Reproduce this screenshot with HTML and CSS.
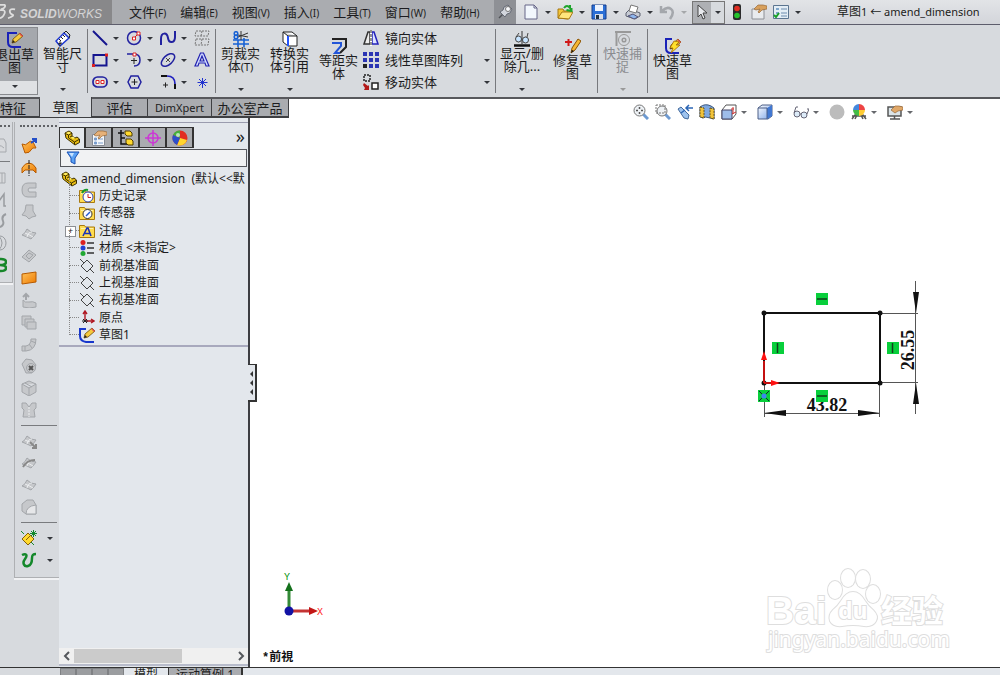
FILE: index.html
```html
<!DOCTYPE html>
<html lang="zh-CN">
<head>
<meta charset="utf-8">
<title>草图1 - amend_dimension</title>
<link rel="stylesheet" href="styles.css">
</head>
<body>
<svg class="defs" aria-hidden="true">
  <defs>
    <linearGradient id="g-orange" x1="0" y1="0" x2="1" y2="1"><stop offset="0" stop-color="#ffc35c"/><stop offset="1" stop-color="#ee7a00"/></linearGradient>
    <linearGradient id="g-blue" x1="0" y1="0" x2="1" y2="1"><stop offset="0" stop-color="#fff"/><stop offset="1" stop-color="#7aa4e8"/></linearGradient>
    <symbol id="plane" viewBox="0 0 16 16"><path d="M8 2l6 6-6 6-6-6zM1 1l4 4M11 11l4 4" fill="none" stroke="#444"/></symbol>
    <symbol id="folder" viewBox="0 0 16 16"><path d="M.5 14.500V2.500h5l1 1.500h9v10.500z" fill="#ffdc50" stroke="#a87a10"/><path d="M2 5.500h12" stroke="#fff3a8"/></symbol>
    <symbol id="part" viewBox="0 0 16 16"><path d="M1 3l4-2 3 2v3l3 2 2-1 2.500 2v3.500L11 15 2 8z" fill="#e8bd12" stroke="#3d3000"/><path d="M1.500 3.500l3 1.500v3l6 4v2.500M4.500 5L8 3M10.500 12l4.500-2.500M6 7l2-1" fill="none" stroke="#3d3000"/><path d="M2 2.900l3-1.200 2 1.200-2.500 1.300zM7 7.500l2-1 2 1.500-2 1z" fill="#fff06a"/></symbol>
    <symbol id="pencil" viewBox="0 0 16 16"><path d="M5 11l1-4 7-6 3 3-7 6z" fill="#f5c93c" stroke="#6e4a00" stroke-width=".8"/><path d="M12 2l3 3 1-1-3-3z" fill="#e05050"/><path d="M5 11l1-3 2 2z" fill="#222"/></symbol>
    <symbol id="hand-list" viewBox="0 0 16 16"><path d="M1.500 4.500h12v11h-12z" fill="#f5f7fa" stroke="#868b94"/><path d="M3.500 8h2v2h-2zM3.500 12h2v2h-2zM7 9h5M7 13h5" fill="#789ccc" stroke="#789ccc"/><path d="M3 5l4-4h5l4 1v3l-5 1-3 3-1-1 2-3-4 1z" fill="#e6b179" stroke="#96683a" stroke-width=".7"/></symbol>
    <symbol id="patch" viewBox="0 0 16 16"><path d="M1 9q3-1 5-6l4 3 5 1q-2 3-5 6l-4-2z" fill="#c6c8cb" stroke="#a3a6aa"/><path d="M4 7q5 2 8 4M6 11q1-5 5-5" fill="none" stroke="#eceef0"/></symbol>
  </defs>
</svg>

<header class="titlebar">
  <div class="brand">
    <svg class="ds" viewBox="0 0 18 22" aria-hidden="true"><path d="M0 3h5q2 1-1 4l-3 1M0 9q7-1 5 4t-6 5M17 8q-6-1-6 2t3 4-5 4" fill="none" stroke="#ddd" stroke-width="2"/></svg>
    <span><b>SOLID</b>WORKS</span>
  </div>
  <nav class="menu" aria-label="主菜单">
    <button>文件<small>(F)</small></button><button>编辑<small>(E)</small></button><button>视图<small>(V)</small></button><button>插入<small>(I)</small></button><button>工具<small>(T)</small></button><button>窗口<small>(W)</small></button><button>帮助<small>(H)</small></button>
  </nav>
  <button class="pin" aria-label="固定"><svg class="i" viewBox="0 0 16 16"><path d="M2 14l4-4" stroke="#4e5156" stroke-width="1.500"/><path d="M3 8l3-2 1-3 4-2 4 4-2 4-3 1-2 3z" fill="#d2d5dc" stroke="#666b75"/><circle cx="11" cy="5" r="2.500" fill="#f6f7fa" stroke="#777"/></svg></button>
  <div class="quick">
    <div class="split"><button aria-label="新建"><svg class="i" viewBox="0 0 16 16"><path d="M2 1h9l3 3v11H2z" fill="#f2f7fd" stroke="#668"/><path d="M11 1v3h3" fill="none" stroke="#668"/></svg></button><button class="drop" aria-label="新建选项"></button></div>
    <div class="split"><button aria-label="打开"><svg class="i" viewBox="0 0 16 16"><path d="M1 14V5h5l1 2h7l-3 8z" fill="#f4c437" stroke="#a67812"/><path d="M1 14l4-6h11l-4 7z" fill="#ffe57c" stroke="#a67812"/><path d="M7 4q3-4 6 0V1M14.500 4v3l-5-1" fill="none" stroke="#1fa52c" stroke-width="2"/></svg></button><button class="drop" aria-label="打开选项"></button></div>
    <div class="split"><button aria-label="保存"><svg class="i" viewBox="0 0 16 16"><path d="M1 1h14v14H1z" fill="#2b6fd6" stroke="#173f8c"/><path d="M4 1h8v6H4z" fill="#edf3fc"/><path d="M4 10h8v5H4z" fill="#d7dde8"/><path d="M5 11h3v4H5z" fill="#234"/></svg></button><button class="drop" aria-label="保存选项"></button></div>
    <div class="split"><button aria-label="打印"><svg class="i" viewBox="0 0 16 16"><path d="M1 9l4-4 10 4v3l-5 3-9-3z" fill="#c7cbd4" stroke="#5c6170"/><path d="M4 7l2-6 7 2-2 6z" fill="#fff" stroke="#777"/><path d="M3 12l5-2 5 3-4 2z" fill="#8fb7ee" stroke="#557"/></svg></button><button class="drop" aria-label="打印选项"></button></div>
    <div class="split off"><button aria-label="撤消" disabled><svg class="i" viewBox="0 0 16 16"><path d="M2 2v6h6M3 7q5-5 9-2t-1 10" fill="none" stroke="#a4a7ac" stroke-width="2.500"/></svg></button><button class="drop" aria-label="撤消选项" disabled></button></div>
    <div class="split picked"><button aria-label="选择"><svg class="i" viewBox="0 0 16 16"><path d="M4 1v12l3-3 2 5 2-1-2-5h4z" fill="#e8eaee" stroke="#444"/></svg></button><button class="drop" aria-label="选择选项"></button></div>
    <button aria-label="重建模型"><svg class="i" viewBox="0 0 16 16"><rect x="4" y="0" width="8" height="16" rx="2" fill="#2b2b2b"/><circle cx="8" cy="4.500" r="2.800" fill="#e12d22"/><circle cx="8" cy="11.500" r="2.800" fill="#25c22c"/></svg></button>
    <button aria-label="文件属性"><svg class="i" viewBox="0 0 16 16"><path d="M1 5h12v10H1z" fill="#e9ebee" stroke="#8d9096"/><path d="M3 5l4-4h5l4 1v3l-5 1-3 3-1-1 2-3-4 1z" fill="#d8a05c" stroke="#96683a" stroke-width=".7"/></svg></button>
    <div class="split"><button aria-label="选项"><svg class="i" viewBox="0 0 16 16"><path d="M.5 1.500h15v13H.5z" fill="#e3edf5" stroke="#5b7590"/><path d="M3 4h3v2H3zM3 8h3v2H3z" fill="#7fa6cb"/><path d="M8 5h6M8 9h6M8 12h6" stroke="#6c8cae"/><path d="M1 11l2 2 3-4" fill="none" stroke="#18a028" stroke-width="2"/></svg></button><button class="drop" aria-label="更多选项"></button></div>
  </div>
  <h1 class="doc">草图<small>1 ← amend_dimension</small></h1>
</header>

<section class="ribbon" aria-label="草图工具">
  <button class="tool exit"><svg class="i" viewBox="0 0 16 16"><path d="M14 15H6q-5 0-5-5V1h9" fill="none" stroke="#1a22b8" stroke-width="2"/><use href="#pencil"/></svg><span>退出草<br>图</span><i class="caret"></i></button>
  <button class="tool"><svg class="i" viewBox="0 0 16 16"><path d="M1 10l4 5L14 7 9 2z" fill="#fff" stroke="#1b35d0" stroke-width="1.500"/><path d="M9 2l2-2 4 4-1 3M4 8l2 2M6 6l2 2M8 4l2 2M3 13l4-1M5 15V10" fill="none" stroke="#222"/></svg><span>智能尺<br>寸</span><i class="caret"></i></button>
  <div class="rule"></div>
  <div class="shapes">
    <div class="split"><button aria-label="直线"><svg class="i" viewBox="0 0 16 16"><path d="M1 1l14 14" stroke="#15158f" stroke-width="2"/></svg></button><button class="drop" aria-label="直线选项"></button></div>
    <div class="split"><button aria-label="圆"><svg class="i" viewBox="0 0 16 16"><circle cx="8" cy="8" r="6.500" fill="none" stroke="#2222a0" stroke-width="1.500"/><path d="M8 8l4-4" stroke="#c22"/><path d="M6.500 7h3v3h-3zM11 2h3v3h-3z" fill="#fff" stroke="#d22"/></svg></button><button class="drop" aria-label="圆选项"></button></div>
    <div class="split"><button aria-label="样条曲线"><svg class="i" viewBox="0 0 16 16"><path d="M1 15V9C1 2 7 2 8 8s7 5 7-1V1" fill="none" stroke="#2222a0" stroke-width="2"/></svg></button><button class="drop" aria-label="样条曲线选项"></button></div>
    <div class="split"><button aria-label="文字框"><svg class="i" viewBox="0 0 16 16"><path d="M2 1h13l-1 5H1zM2 9h13l-1 6H1zM8 1L7 6M8 9l-1 6" fill="none" stroke="#777" stroke-dasharray="2 1"/></svg></button></div>
    <div class="split"><button aria-label="矩形"><svg class="i" viewBox="0 0 16 16"><path d="M1.500 3h13v10.500h-13z" fill="none" stroke="#15158f" stroke-width="2"/><path d="M0 12h3v3H0zM13 1.500h3v3h-3z" fill="#d22"/></svg></button><button class="drop" aria-label="矩形选项"></button></div>
    <div class="split"><button aria-label="圆弧"><svg class="i" viewBox="0 0 16 16"><path d="M1 2h7q6 0 6 6t-6 6" fill="none" stroke="#2222a0" stroke-width="1.500"/><path d="M5 8.500h6M8 6v6" stroke="#222"/><path d="M7 1h3v3H7z" fill="#fff" stroke="#d22"/></svg></button><button class="drop" aria-label="圆弧选项"></button></div>
    <div class="split"><button aria-label="椭圆"><svg class="i" viewBox="0 0 16 16"><ellipse cx="8" cy="8" rx="8" ry="4.500" transform="rotate(-42 8 8)" fill="none" stroke="#2222a0" stroke-width="1.500"/><path d="M6 6l4 4M10 6l-4 4" stroke="#222" stroke-width=".8"/></svg></button><button class="drop" aria-label="椭圆选项"></button></div>
    <div class="split"><button aria-label="文字"><svg class="i" viewBox="0 0 16 16"><path d="M1 14h3l1-3h6l1 3h3L9.500 1h-3zM6 9l2-5 2 5z" fill="#d3dcff" stroke="#2222b0" stroke-width="1.200"/></svg></button></div>
    <div class="split"><button aria-label="槽口"><svg class="i" viewBox="0 0 16 16"><rect x="1" y="3" width="14" height="10" rx="4.500" fill="none" stroke="#2222a0" stroke-width="1.700"/><path d="M4 6.500h3v3H4zM9 6.500h3v3H9z" fill="#fff" stroke="#d22"/></svg></button><button class="drop" aria-label="槽口选项"></button></div>
    <div class="split"><button aria-label="多边形"><svg class="i" viewBox="0 0 16 16"><path d="M5 2h7l3 6-3 6H5L2 8z" fill="none" stroke="#2222a0" stroke-width="1.500"/><path d="M5.500 8h6M8.500 5v6" stroke="#222"/></svg></button></div>
    <div class="split"><button aria-label="圆角"><svg class="i" viewBox="0 0 16 16"><path d="M1 2h6M15 10v5" stroke="#111" stroke-width="2"/><path d="M7 2q8 0 8 8" fill="none" stroke="#2222c0" stroke-width="1.700"/><path d="M3 11h5M5.500 8.500v5" stroke="#222"/></svg></button><button class="drop" aria-label="圆角选项"></button></div>
    <div class="split"><button aria-label="点"><svg class="i" viewBox="0 0 16 16"><path d="M8.500 4v10M3.500 8.500h10M5 5l7 7M12 5l-7 7" stroke="#2233d0"/></svg></button></div>
  </div>
  <div class="rule"></div>
  <button class="tool"><svg class="i" viewBox="0 0 16 16"><path d="M0 9h16M11 7v9M0 13h16M5 9v7" stroke="#1761d4" stroke-width="1.600"/><path d="M5 4l10 2M5 6l10-4M8 0v9" stroke="#333"/><circle cx="3" cy="2.500" r="1.800" fill="none" stroke="#1761d4" stroke-width="1.500"/><circle cx="3" cy="6" r="1.800" fill="none" stroke="#1761d4" stroke-width="1.500"/></svg><span>剪裁实<br>体<small>(T)</small></span><i class="caret"></i></button>
  <button class="tool"><svg class="i" viewBox="0 0 16 16"><path d="M1 1h9l5 4v10H6l-5-4zM1 1l5 4h9M6 5v10" fill="#fff" stroke="#222"/><path d="M6 5v10" stroke="#2255ff" stroke-width="2"/></svg><span>转换实<br>体引用</span><i class="caret"></i></button>
  <button class="tool low"><svg class="i" viewBox="0 0 16 16"><path d="M1 1h14v8l-6 6" fill="none" stroke="#222" stroke-width="2"/><path d="M1 5h9v3l-6 7h5" fill="none" stroke="#2255d8" stroke-width="2"/></svg><span>等距实<br>体</span></button>
  <div class="list">
    <button class="item"><svg class="i" viewBox="0 0 16 16"><path d="M1 14L5 2h2v12z" fill="#eee" stroke="#333" stroke-width="1.500"/><path d="M15 14L11 2H9v12z" fill="#dfe4ff" stroke="#22b" stroke-width="1.500"/><path d="M8 0v16" stroke="#fff" stroke-width="2"/><path d="M8 0v16" stroke="#222" stroke-dasharray="3 1"/></svg><span>镜向实体</span></button>
    <button class="item"><svg class="i" viewBox="0 0 16 16"><path d="M0 0h4v4H0zM6 0h4v4H6zM12 0h4v4h-4zM0 6h4v4H0zM6 6h4v4H6zM12 6h4v4h-4zM6 12h4v4H6zM12 12h4v4h-4z" fill="#2a34b4"/><path d="M0 12h4v4H0z" fill="#222"/></svg><span>线性草图阵列</span><i class="caret"></i></button>
    <button class="item"><svg class="i" viewBox="0 0 16 16"><path d="M1 1h6v6H1z" fill="none" stroke="#222" stroke-width="1.500" stroke-dasharray="2 1"/><path d="M9 9h6v6H9z" fill="#fff" stroke="#222" stroke-width="1.500"/><path d="M1 9l4 3 1-1v5H1l1-2-2-3z" fill="#b31919"/></svg><span>移动实体</span><i class="caret"></i></button>
  </div>
  <div class="rule"></div>
  <button class="tool wide"><svg class="i" viewBox="0 0 16 16"><path d="M0 14.500h16" stroke="#111" stroke-width="2.500"/><path d="M8 0v13M4 11l8-5" stroke="#333"/><circle cx="4.500" cy="8" r="3" fill="#c7e4ff" stroke="#444"/><circle cx="11.500" cy="9" r="3" fill="#c7e4ff" stroke="#444"/><path d="M2 6l3-4M13 6l1-4" stroke="#444"/></svg><span>显示/删<br>除几...</span><i class="caret"></i></button>
  <button class="tool low"><svg class="i" viewBox="0 0 16 16"><path d="M0 4h7M3.500 1v7" stroke="#d01818" stroke-width="2"/><path d="M6 15l1-5 6-9 3 2-6 9z" fill="#f7b733" stroke="#8a5200"/><path d="M6 15l1-3 2 1z" fill="#111"/></svg><span>修复草<br>图</span></button>
  <div class="rule"></div>
  <button class="tool" disabled><svg class="i" viewBox="0 0 16 16"><path d="M0 1h16M1.500 1v14" stroke="#999" stroke-width="2"/><circle cx="9" cy="9" r="5.500" fill="none" stroke="#999"/><circle cx="9" cy="9" r="1.800" fill="none" stroke="#999" stroke-width="1.500"/></svg><span>快速捕<br>捉</span><i class="caret"></i></button>
  <div class="rule"></div>
  <button class="tool low"><svg class="i" viewBox="0 0 16 16"><path d="M14 15H6q-5 0-5-5V1h6" fill="none" stroke="#1a22b8" stroke-width="2"/><use href="#pencil"/><path d="M9 3l5 1-3 3h4l-9 8 2-5H5z" fill="#ffe02a" stroke="#a66b00" stroke-width=".8"/></svg><span>快速草<br>图</span></button>
</section>

<div class="tabrow">
  <nav class="tabs" aria-label="命令管理器">
    <button class="first">特征</button><button class="on">草图</button><button>评估</button><button><small>DimXpert</small></button><button>办公室产品</button>
  </nav>
  <div class="viewbar">
    <button aria-label="整屏显示全图"><svg class="i" viewBox="0 0 16 16"><path d="M10 10l5 5" stroke="#6d9ad2" stroke-width="3"/><circle cx="6.500" cy="6.500" r="5.500" fill="#eef2f6" stroke="#777"/><path d="M6.500 3v7M3 6.500h7" stroke="#555" stroke-width="1.500" stroke-dasharray="2 3"/></svg></button>
    <button aria-label="局部放大"><svg class="i" viewBox="0 0 16 16"><path d="M10 10l5 5" stroke="#6d9ad2" stroke-width="3"/><circle cx="7" cy="7" r="5" fill="#eef2f6" stroke="#777"/><path d="M1 1h9v8H1z" fill="none" stroke="#777" stroke-dasharray="2 1"/></svg></button>
    <button aria-label="上一视图"><svg class="i" viewBox="0 0 16 16"><path d="M1 5l3-2 8 8-1 4-4-1z" fill="#9cc2ee" stroke="#43699b"/><path d="M16 4H9M12 1L9 4l3 3M4 9l4-3" fill="none" stroke="#2b65b5" stroke-width="1.500"/></svg></button>
    <button aria-label="剖面视图"><svg class="i" viewBox="0 0 16 16"><path d="M1 3q5-4 11-1l3 2v11l-4-1q-5-2-7 0l-3-1z" fill="#7ea8e0" stroke="#3c577d"/><path d="M11 4l4 1v10l-4-1zM1 3l4 1v10l-4-1z" fill="#f1c33a" stroke="#665018" stroke-dasharray="2 1"/></svg></button>
    <div class="split"><button aria-label="视图定向"><svg class="i" viewBox="0 0 16 16"><path d="M1 6l4-5h10v9l-4 5H1z" fill="#fff" stroke="#555"/><path d="M1 6h10v9H1z" fill="#9ebdea" stroke="#446"/><path d="M12 3v7M15 8l-4 2M13 5h-3" stroke="#c33" fill="none"/></svg></button><button class="drop" aria-label="视图定向选项"></button></div>
    <div class="split"><button aria-label="显示样式"><svg class="i" viewBox="0 0 16 16"><path d="M1 4l4-3h10v11l-4 3H1z" fill="url(#g-blue)" stroke="#4c5f86"/><path d="M10 4l5-3v11l-5 3z" fill="#4178d2"/><path d="M1 4h9v11" fill="none" stroke="#4c5f86"/></svg></button><button class="drop" aria-label="显示样式选项"></button></div>
    <div class="split"><button aria-label="隐藏/显示项目"><svg class="i" viewBox="0 0 16 16"><circle cx="4" cy="10" r="3" fill="#dcebf8" stroke="#667"/><circle cx="11" cy="11" r="3" fill="#dcebf8" stroke="#667"/><path d="M1 9l2-6h2M14 10l2-5h-2M7 10h1" fill="none" stroke="#667"/></svg></button><button class="drop" aria-label="隐藏项目选项"></button></div>
    <button aria-label="编辑外观"><svg class="i" viewBox="0 0 16 16"><circle cx="8" cy="8" r="7.500" fill="#bcbcbc"/></svg></button>
    <div class="split"><button aria-label="应用布景"><svg class="i" viewBox="0 0 16 16"><path d="M1 15l3-4h8l3 4M4 15l2-4M12 15l-2-4M1 12h14" fill="none" stroke="#555" stroke-width="1.500"/><path d="M8 6V0a6 6 0 0 1 6 6z" fill="#e44"/><path d="M8 6V0a6 6 0 0 0-6 6z" fill="#48d"/><path d="M8 6v6a6 6 0 0 1-6-6z" fill="#4b4"/><path d="M8 6v6a6 6 0 0 0 6-6z" fill="#fc3"/></svg></button><button class="drop" aria-label="布景选项"></button></div>
    <div class="split"><button aria-label="视图设定"><svg class="i" viewBox="0 0 16 16"><path d="M1 3h13v9H1z" fill="#dbe4e8" stroke="#555" stroke-width="1.500"/><path d="M3 15h10M7.500 12v3" stroke="#555" stroke-width="1.500"/><path d="M4 6l4-4h4l4 1v3l-5 1-3 2z" fill="#e0a869" stroke="#96683a" stroke-width=".7"/></svg></button><button class="drop" aria-label="视图设定选项"></button></div>
  </div>
</div>

<main class="work">
  <div class="dock">
    <div class="strip cut">
      <i class="grip"></i>
      <button aria-label="曲面"><svg class="i" viewBox="0 0 16 16"><path d="M1 5l4-4h8l2 4v9H1zM3 10q5-5 10 0" fill="#d8dadd" stroke="#a6a9ad"/></svg></button>
      <hr>
      <button aria-label="放样"><svg class="i" viewBox="0 0 16 16"><path d="M3 2h5v13H3zM8 4h6v10H8zM11 4v10" fill="#d8dadd" stroke="#a6a9ad"/></svg></button>
      <button aria-label="折线"><svg class="i" viewBox="0 0 16 16"><path d="M3 4l5 6 5-7v12h2" fill="none" stroke="#999ca0" stroke-width="1.500"/></svg></button>
      <button aria-label="曲线"><svg class="i" viewBox="0 0 16 16"><path d="M15 1q-5 2-3 7t-6 7" fill="none" stroke="#999ca0" stroke-width="2"/></svg></button>
      <button aria-label="投影"><svg class="i" viewBox="0 0 16 16"><ellipse cx="9" cy="8" rx="6" ry="7" fill="none" stroke="#999ca0"/><path d="M8 1q6 7 0 14" fill="none" stroke="#999ca0"/></svg></button>
      <button aria-label="螺旋线"><svg class="i" viewBox="0 0 16 16"><path d="M5 2h5q5 0 5 3t-6 3q6 0 6 3t-5 3H5" fill="none" stroke="#17872a" stroke-width="2.500"/></svg></button>
    </div>
    <div class="strip">
      <i class="grip"></i>
      <button aria-label="拉伸曲面"><svg class="i" viewBox="0 0 16 16"><path d="M1 6q4 2 6-1t5-1l3 6q-4-1-5 2t-6 3z" fill="url(#g-orange)" stroke="#b75a00"/><path d="M10 5l4-3M11 1h4v4" fill="none" stroke="#244fc8" stroke-width="2"/></svg></button>
      <button aria-label="旋转曲面"><svg class="i" viewBox="0 0 16 16"><path d="M1 13V8q3-5 7-5t7 5v5l-3-3H4z" fill="url(#g-orange)" stroke="#b75a00"/><path d="M8 0v16" stroke="#222" stroke-dasharray="4 1"/></svg></button>
      <button class="off" aria-label="扫描曲面"><svg class="i" viewBox="0 0 16 16"><path d="M15 1H7Q1 1 1 8t6 7h8v-5H8q-2-2 0-4h7z"/></svg></button>
      <button class="off" aria-label="放样曲面"><svg class="i" viewBox="0 0 16 16"><path d="M5 1h7v6l3 5-4 1-3 2-3-3-4-1q4-3 4-10z"/></svg></button>
      <button class="off" aria-label="边界曲面"><svg class="i" viewBox="0 0 16 16"><use href="#patch"/></svg></button>
      <button class="off" aria-label="填充曲面"><svg class="i" viewBox="0 0 16 16"><path d="M1 9l7-7 7 5-7 7zM5 8l3-3 4 2-4 4z"/></svg></button>
      <button aria-label="平面区域"><svg class="i" viewBox="0 0 16 16"><path d="M1 4l14-2v10L1 14z" fill="url(#g-orange)" stroke="#b75a00"/></svg></button>
      <button class="off" aria-label="等距曲面"><svg class="i" viewBox="0 0 16 16"><path d="M2 8q2 3 6 2t7 1v4q-7 2-13 0z"/><path d="M5 8V2M2 5l3-3 3 3" fill="none" stroke-width="2"/></svg></button>
      <button class="off" aria-label="加厚"><svg class="i" viewBox="0 0 16 16"><path d="M1 2h9v9H1z"/><path d="M4 5h9v8H4z"/><path d="M6 8h9v7H6z"/></svg></button>
      <button class="off" aria-label="弯曲"><svg class="i" viewBox="0 0 16 16"><path d="M1 10h4q5-1 5-7h5q0 11-10 12H1zM4 10v5M8 8l3 4M10 5l5 2"/></svg></button>
      <button class="off" aria-label="删除面"><svg class="i" viewBox="0 0 16 16"><path d="M1 6l4-5 6 1 4 5-4 8H5z"/><circle cx="10" cy="10" r="4.500"/><path d="M8 8l4 4M12 8l-4 4" stroke="#555" stroke-width="2"/></svg></button>
      <button class="off" aria-label="实体"><svg class="i" viewBox="0 0 16 16"><path d="M1 4l7-3 7 3v8l-7 4-7-4zM1 4l7 4 7-4M8 8v8M4 3l7 4"/></svg></button>
      <button class="off" aria-label="缝合曲面"><svg class="i" viewBox="0 0 16 16"><path d="M1 1h4l3 4 3-4h4v5l-2 2 1 7H2l1-7-2-2z"/><path d="M8 5v10" stroke="#eceef0" stroke-dasharray="2 1"/></svg></button>
      <hr>
      <button class="off" aria-label="延伸曲面"><svg class="i" viewBox="0 0 16 16"><use href="#patch"/><path d="M9 9l6 6M15 11v4h-4" fill="none" stroke="#888" stroke-width="2"/></svg></button>
      <button class="off" aria-label="剪裁曲面"><svg class="i" viewBox="0 0 16 16"><use href="#patch"/><path d="M2 12q4-7 12-7" fill="none" stroke="#888" stroke-width="2"/></svg></button>
      <button class="off" aria-label="解除剪裁"><svg class="i" viewBox="0 0 16 16"><use href="#patch"/></svg></button>
      <button class="off" aria-label="圆角曲面"><svg class="i" viewBox="0 0 16 16"><path d="M1 5l5-4h6l3 5v9H5l-4-3z"/><path d="M5 15q0-8 10-9v9z" fill="#e6e7e9"/></svg></button>
      <hr>
      <div class="split"><button aria-label="参考几何体"><svg class="i" viewBox="0 0 16 16"><path d="M1 9l6-6 6 6-6 6z" fill="#ffd92e" stroke="#85600a"/><path d="M5 10l4-4" stroke="#85600a"/><path d="M12.500 0v7M9 3.500h7M10 1l5 5M15 1l-5 5M0 1l3 3M10 12l3 3" stroke="#14882b"/></svg></button><button class="drop" aria-label="参考几何体选项"></button></div>
      <div class="split"><button aria-label="曲线"><svg class="i" viewBox="0 0 16 16"><path d="M1 3C5 1 7 3 4 7S3 15 7 14s4-5 4-8 1-4 4-4" fill="none" stroke="#14882b" stroke-width="2.500"/></svg></button><button class="drop" aria-label="曲线选项"></button></div>
    </div>
  </div>

  <aside class="panel">
    <div class="ptabs">
      <button class="on" aria-label="特征管理器"><svg class="i" viewBox="0 0 16 16"><use href="#part"/></svg></button>
      <button aria-label="属性管理器"><svg class="i" viewBox="0 0 16 16"><use href="#hand-list"/></svg></button>
      <button aria-label="配置管理器"><svg class="i" viewBox="0 0 16 16"><path d="M0 3h6M3 0v14h6M3 8h4" fill="none" stroke="#111" stroke-width="1.500"/><path d="M7 1h5l2 2v3H9L7 4zM8 9h5l2 2v4h-5l-2-2z" fill="#ffd92e" stroke="#4f3c00"/></svg></button>
      <button aria-label="尺寸专家管理器"><svg class="i" viewBox="0 0 16 16"><circle cx="8" cy="8" r="5" fill="none" stroke="#cc37d5" stroke-width="1.500"/><path d="M8 0v16M0 8h16" stroke="#cc37d5" stroke-width="1.500"/></svg></button>
      <button aria-label="外观管理器"><svg class="i" viewBox="0 0 16 16"><circle cx="8" cy="8" r="7.500" fill="#e22e22"/><path d="M8 8L1 5a7.500 7.500 0 0 1 7-4.500z" fill="#44b23d"/><path d="M8 8l7 2a7.500 7.500 0 0 1-10 5z" fill="#ffd52e"/><path d="M8 8l-3 7a7.500 7.500 0 0 1-4-10z" fill="#2c50ca"/><circle cx="6" cy="5" r="2" fill="#fff" opacity=".65"/></svg></button>
      <button class="more" aria-label="更多">»</button>
    </div>
    <label class="filter"><svg class="i" viewBox="0 0 16 16"><path d="M2 2h12l-4 6v6l-4-2V8z" fill="#5ba2f5" stroke="#1a51b4"/><path d="M4 3h5l-2 4z" fill="#c9e3ff"/></svg><input type="text" aria-label="过滤"></label>
    <ul class="tree">
      <li class="root"><svg class="i" viewBox="0 0 16 16"><use href="#part"/></svg>amend_dimension&nbsp; (默认&lt;&lt;默</li>
      <li><svg class="i" viewBox="0 0 16 16"><use href="#folder"/><circle cx="9" cy="9" r="5" fill="#fff" stroke="#2d42b4"/><path d="M9 6v3.500h3" fill="none" stroke="#c22"/><path d="M3 5q2-4 6-3" fill="none" stroke="#179a2c" stroke-width="2"/></svg>历史记录</li>
      <li><svg class="i" viewBox="0 0 16 16"><use href="#folder"/><circle cx="8.500" cy="9" r="4.500" fill="#fff" stroke="#333"/><path d="M7 11l4-4" stroke="#245bd0" stroke-width="1.500"/></svg>传感器</li>
      <li class="plus"><svg class="i" viewBox="0 0 16 16"><use href="#folder"/><path d="M4 13l4-8h1l3 8M6 10.500h5" fill="none" stroke="#1a32b8" stroke-width="1.600"/></svg>注解</li>
      <li><svg class="i" viewBox="0 0 16 16"><circle cx="4" cy="2.500" r="2.500" fill="#dc2020"/><circle cx="4" cy="8" r="2.500" fill="#2440d4"/><circle cx="4" cy="13.500" r="2.500" fill="#20a832"/><path d="M8 3h7M8 8h7M8 13h7" stroke="#333" stroke-width="1.500"/></svg>材质 &lt;未指定&gt;</li>
      <li><svg class="i" viewBox="0 0 16 16"><use href="#plane"/></svg>前视基准面</li>
      <li><svg class="i" viewBox="0 0 16 16"><use href="#plane"/></svg>上视基准面</li>
      <li><svg class="i" viewBox="0 0 16 16"><use href="#plane"/></svg>右视基准面</li>
      <li><svg class="i" viewBox="0 0 16 16"><path d="M6 2v9h8M4 4l2-3 2 3M12 9l3 2-3 2" fill="none" stroke="#b01822" stroke-width="1.400"/><path d="M3 11h6M4 9l4 4M8 9l-4 4" stroke="#222"/></svg>原点</li>
      <li><svg class="i" viewBox="0 0 16 16"><path d="M15 15H7q-6-1-6-6V2h6" fill="none" stroke="#1737cc" stroke-width="2"/><use href="#pencil"/></svg>草图1</li>
    </ul>
    <div class="scroll"><button aria-label="向左滚动"><svg viewBox="0 0 8 10"><path d="M6 1L2 5l4 4" /></svg></button><div class="track"><div class="thumb"></div></div><button aria-label="向右滚动"><svg viewBox="0 0 8 10"><path d="M2 1l4 4-4 4"/></svg></button></div>
  </aside>

  <section class="canvas" aria-label="图形区域">
    <button class="handle" aria-label="折叠面板"><i></i><i></i><i></i></button>
    <svg class="sketch" viewBox="740 270 200 160" role="img" aria-label="矩形草图">
      <path d="M764.500 384v33M879.500 384v33M880 313.500h38M880 382.500h38M764 413.500h116M915.500 281v133" stroke="#555" fill="none"/>
      <path d="M764 413l22-3v6zM880 413l-22-3v6zM916 313l-3-21h6zM916 383l-3 21h6z" fill="#111"/>
      <path d="M764 313h116v70H764z" fill="none" stroke="#111" stroke-width="2"/>
      <g fill="#111"><circle cx="764" cy="313" r="2.500"/><circle cx="880" cy="313" r="2.500"/><circle cx="880" cy="383" r="2.500"/><circle cx="764" cy="383" r="2.500"/></g>
      <path d="M764 383v-22M764 383h10" stroke="#f11" stroke-width="1.500"/>
      <path d="M764 351l-3 9h6zM780 383l-9-3v6z" fill="#f11"/>
      <text class="dim" x="827" y="411" text-anchor="middle">43.82</text>
      <text class="dim" transform="translate(914 350) rotate(-90)" text-anchor="middle">26.55</text>
      <path d="M816 293h12v12h-12zM816 390h12v12h-12zM772 342h12v12h-12zM887 342h12v12h-12zM758 390h12v12h-12z" fill="#08cf3b"/>
      <path d="M817 299h10M817 396h10M777.500 343v10M892.500 343v10" stroke="#123d1c" stroke-width="1.500"/>
      <path d="M759 391l10 10M769 391l-10 10" stroke="#123"/><circle cx="764" cy="396" r="2.500" fill="#3c86f0"/>
    </svg>
    <svg class="triad" viewBox="280 570 46 50" role="img" aria-label="坐标系">
      <path d="M289 611v-22" stroke="#338a37" stroke-width="3"/><path d="M289 582l-4 9h8z" fill="#14701b"/>
      <path d="M289 611h22" stroke="#c43434" stroke-width="3"/><path d="M318 611l-9-4v8z" fill="#c21616"/>
      <circle cx="289" cy="611" r="4.500" fill="#1212a4"/>
      <text x="284" y="580" fill="#0a930f">Y</text><text x="317" y="615" fill="#f22">X</text>
    </svg>
    <div class="viewname">*前視</div>
    <svg class="mark" viewBox="760 560 190 95" aria-hidden="true">
      <g class="outline">
        <path d="M853 592q7 0 12 9 3 5 8 9 6 6 3 11-3 6-12 5-11-2-22 0-9 1-12-5-2-6 3-11 5-4 8-9 5-9 12-9z"/>
        <ellipse cx="835" cy="590" rx="7" ry="9"/><ellipse cx="848" cy="578" rx="7" ry="9"/><ellipse cx="863" cy="579" rx="7" ry="9"/><ellipse cx="873" cy="594" rx="7" ry="9"/>
        <text x="766" y="624" class="big">Bai</text>
        <text x="838" y="619" class="du">du</text>
        <text x="881" y="622" class="cn">经验</text>
        <text x="768" y="647" class="url">jingyan.baidu.com</text>
      </g>
    </svg>
  </section>
</main>

<footer class="sheets">
  <div class="nav"><i></i><i></i><i></i><i></i></div>
  <button class="on">模型</button><button>运动算例 1</button>
</footer>
</body>
</html>
```
FILE: styles.css
```css
:root {
  --bar: #d7dade;
  --panel: #e3e7ec;
  --gray: #aaacb0;
  --line: #4c4d52;
}
* { box-sizing: border-box; }
body {
  margin: 0;
  height: 100vh;
  display: flex;
  flex-direction: column;
  overflow: hidden;
  background: var(--bar);
  color: #1c1c20;
  font: 12px/16px "Noto Sans", "Noto Sans CJK SC", sans-serif;
}
button {
  margin: 0;
  padding: 0;
  border: 0;
  background: none;
  color: inherit;
  font: inherit;
}
small { font-size: 11px; }
.defs { position: absolute; width: 0; height: 0; }
.i { display: block; width: 16px; height: 16px; flex: none; }

.caret, .drop::after {
  display: block;
  width: 0;
  height: 0;
  border: 3px solid transparent;
  border-top-color: #33353a;
  border-bottom: 0;
}
.drop::after { content: ""; }
.split { display: flex; align-items: center; }
.drop { width: 16px; height: 16px; display: grid; place-items: center; }

/* title bar */
.titlebar {
  flex: none;
  height: 25px;
  display: flex;
  border-bottom: 1px solid #5d5d6c;
  background: linear-gradient(#e2e4e7, #d3d5da);
  white-space: nowrap;
}
.brand {
  width: 112px;
  display: flex;
  align-items: center;
  gap: 4px;
  background: #88888a;
  color: #d4d4d5;
  font: italic 12px/24px "Liberation Sans", sans-serif;
}
.brand span { padding-top: 4px; }
.ds { width: 16px; height: 22px; }
.menu {
  display: flex;
  align-items: center;
  gap: 14px;
  width: 382px;
  padding-left: 17px;
  background: var(--gray);
  font-size: 13px;
}
.menu small { font-size: 10px; }
.pin { width: 22px; display: grid; place-items: center; background: #8e9095; }
.quick { display: flex; align-items: center; padding-left: 6px; }
.quick button:not(.drop) { width: 18px; display: grid; place-items: center; }
.quick .picked { margin-right: 3px; border: 1px solid #777; height: 23px; }
.quick .picked button { height: 21px; background: #aeb0b4; }
.quick .picked .drop { width: 13px; background: var(--bar); }
.quick > button { margin-right: 4px; }
.off .drop::after { border-top-color: #a5a7aa; }
.doc { flex: 1; margin: 0; padding-left: 31px; font-size: 12px; font-weight: 400; line-height: 24px; }

/* ribbon */
.ribbon {
  flex: none;
  height: 74px;
  padding-top: 2px;
  display: flex;
  overflow: hidden;
  border-bottom: 2px solid #57585c;
  font-size: 13px;
  white-space: nowrap;
}
.tool {
  width: 49px;
  padding: 4px 0 6px;
  display: flex;
  flex-direction: column;
  align-items: center;
  line-height: 13px;
}
.tool .caret { margin-top: auto; }
.tool.low { padding-top: 11px; }
.tool.wide { width: 52px; }
.tool:disabled { color: #8b8d91; }
.tool:disabled .caret { border-top-color: #999; }
.exit {
  width: 47px;
  margin: 0 0 2px -9px;
  border: 1px solid #888a8e;
  background: linear-gradient(#a5a8ad 0 53px, #dfe1e4 53px);
}
.rule { width: 1px; margin: 2px 0 4px; background: #77797d; }
.shapes {
  width: 127px;
  padding-left: 4px;
  display: grid;
  grid-template: repeat(3, 22px) / 34px 34px 34px 16px;
}
.list { width: 132px; display: grid; grid-template-rows: repeat(3, 22px); }
.item { display: flex; align-items: center; gap: 6px; padding-right: 5px; }
.item .caret { margin-left: auto; }

/* command tabs and view toolbar */
.tabrow { position: relative; z-index: 1; flex: none; height: 19px; display: flex; background: #fff; }
.tabs {
  display: grid;
  grid-template-columns: 40px 52px 56px 64px 77px;
  font-size: 13px;
}
.tabs button {
  border: 1px solid #3f4043;
  border-width: 0 1px 2px 0;
  background: var(--gray);
  line-height: 16px;
  text-align: center;
}
.tabs .first { text-align: left; }
.tabs .on { margin-top: -2px; border-bottom-width: 1px; background: var(--bar); }
.viewbar { display: flex; align-items: start; gap: 6px; padding: 5px 0 0 344px; }
.viewbar .drop { width: 14px; }
.viewbar .drop::after { border-top-color: #66686c; }

/* work area */
.work { flex: 1; min-height: 0; display: flex; }
.dock { width: 59px; flex: none; display: flex; align-items: start; gap: 1px; padding-top: 4px; overflow: hidden; }
.strip {
  flex: 1;
  padding: 3px 0 6px 6px;
  border: 1px solid #aeb0b3;
  border-width: 0 0 1px 1px;
  box-shadow: 0 2px 0 #f1f2f4;
}
.strip.cut { flex: none; width: 13px; padding-left: 0; border-left: 0; border-right: 1px solid #aeb0b3; }
.strip.cut button { margin-left: -9px; }
.strip.cut .grip { margin-left: 0; }
.grip { display: block; height: 3px; margin: 0 2px 7px -1px; border-top: 2px dotted #606266; }
.strip button:not(.drop) { display: grid; align-items: center; height: 22px; }
.strip .split .drop { margin-left: 5px; }
.strip hr { height: 1px; margin: 4px 2px 4px 0; border: 0; background: #797b7e; }
.strip .off { fill: #c6c8cb; stroke: #a3a6aa; }

.panel {
  width: 191px;
  flex: none;
  display: flex;
  flex-direction: column;
  overflow: hidden;
  border-right: 2px solid #3d3e42;
  background: var(--panel);
}
.ptabs {
  flex: none;
  display: grid;
  grid-template-columns: repeat(5, 27px) 1fr;
  height: 30px;
  margin-top: 4px;
  padding-top: 4px;
  border-top: 1px solid #9a9cae;
  background: var(--panel);
}
.ptabs button {
  display: grid;
  place-items: center;
  height: 21px;
  border: 1px solid #333;
  border-width: 1px 2px 1px 0;
  background: var(--gray);
}
.ptabs .on { border-width: 1px 2px 0 1px; background: var(--panel); }
.ptabs .more { justify-items: end; padding: 0 3px 4px 0; border: 0; background: none; font-size: 18px; line-height: 16px; }
.filter {
  flex: none;
  display: flex;
  align-items: center;
  height: 18px;
  margin: -3px 1px 3px;
  padding-left: 4px;
  border: 1px solid #55575c;
  background: #f1f2f3;
}
.filter input { flex: 1; min-width: 0; border: 0; padding: 0; background: none; outline: 0; font: inherit; }
.tree {
  flex: none;
  height: 177px;
  margin: 0;
  padding: 0 0 1px;
  display: grid;
  grid-auto-rows: 1fr;
  list-style: none;
  white-space: nowrap;
  border-bottom: 2px solid #a8a9bd;
}
.tree li {
  position: relative;
  display: flex;
  align-items: center;
  gap: 4px;
  padding-left: 20px;
}
.tree .root { padding-left: 2px; }
.tree li:not(.root)::before {
  content: "";
  position: absolute;
  left: 10px;
  bottom: 50%;
  width: 9px;
  height: 100%;
  border: 1px dotted #888;
  border-width: 0 0 1px 1px;
}
.tree .plus::after {
  content: "+";
  position: absolute;
  left: 6px;
  top: 4px;
  width: 9px;
  height: 9px;
  border: 1px solid #8c8f94;
  background: #fff;
  font-size: 9px;
  line-height: 7px;
  text-align: center;
}
.scroll { flex: none; display: flex; height: 16px; margin: auto 0 3px; background: #f0f0f0; box-shadow: 0 2px 0 #b8bccb; }
.scroll button { width: 15px; display: grid; place-items: center; }
.scroll svg { width: 8px; height: 10px; fill: none; stroke: #55585c; stroke-width: 2; }
.track { flex: 1; padding: 1px 0; }
.thumb { width: 68%; height: 14px; background: #cbcbcb; }

.canvas { flex: 1; min-width: 0; position: relative; background: #fff; }
.handle {
  position: absolute;
  left: -2px;
  top: 246px;
  width: 9px;
  height: 38px;
  display: grid;
  place-items: center;
  padding: 4px 0;
  border: 1px solid #333;
  border-width: 1px 2px 2px 0;
  background: var(--panel);
}
.handle i { border: 3px solid transparent; border-right-color: #333; border-left: 0; }
.sketch { position: absolute; left: 490px; top: 152px; width: 200px; height: 160px; }
.dim { font: bold 18px "Liberation Serif", serif; fill: #111; }
.triad { position: absolute; left: 30px; bottom: 47px; width: 46px; height: 50px; font: 10px "Liberation Mono", monospace; }
.viewname { position: absolute; left: 12px; bottom: 1px; font: bold 12px/16px "Liberation Mono", "Noto Sans CJK TC", monospace; color: #111; }
.mark { position: absolute; right: 50px; bottom: 12px; width: 190px; height: 95px; }
.outline { fill: #fff; stroke: #dedede; stroke-width: 2; paint-order: stroke; }
.outline text { font-family: "Noto Sans", "Noto Sans CJK SC", sans-serif; }
.outline .big { font: bold 39px "Liberation Sans", sans-serif; }
.outline .du { font-size: 23px; font-weight: 700; }
.outline .cn { font-size: 31px; font-weight: 700; }
.outline .url { font-size: 21px; }

/* sheet tabs */
.sheets {
  flex: none;
  height: 8px;
  display: flex;
  padding-left: 60px;
  overflow: hidden;
  border-top: 1px solid #333;
  background: linear-gradient(90deg, var(--bar) 60px, var(--panel) 60px);
  line-height: 10px;
}
.nav { display: grid; grid-template-columns: repeat(4, 16px); background: #9b9da0; }
.nav i { border: 1px solid #7f8184; border-bottom: 0; }
.sheets button { height: 14px; padding: 0 7px; border-right: 2px solid #333; border-left: 1px solid #333; background: var(--gray); line-height: 10px; }
.sheets .on { padding: 0 10px; border-width: 0; background: var(--panel); }
```
